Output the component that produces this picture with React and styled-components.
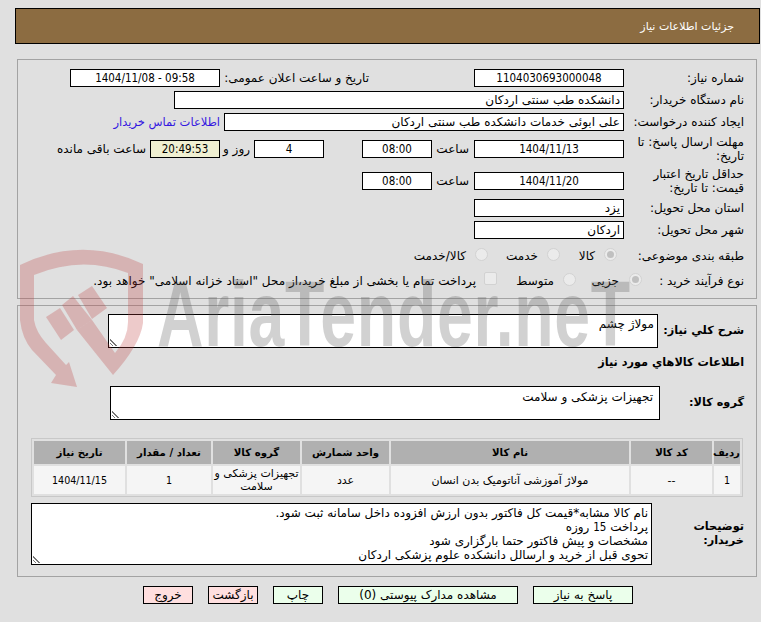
import React from "react";
import styled, { createGlobalStyle } from "styled-components";

const Global = createGlobalStyle`
  html, body { margin: 0; padding: 0; background: #e0e0e0; }
  body { font-family: "DejaVu Sans", Tahoma, sans-serif; font-size: 12px; color: #000; }
  * { box-sizing: border-box; }
`;
const Page = styled.div`
  position: relative;
  width: 761px;
  height: 622px;
  overflow: hidden;
  padding-top: 8px;
  direction: rtl;
`;
const Header = styled.div`
  width: 745px;
  height: 36px;
  margin-right: 1px;
  background: #8c6c41;
  border: 1px solid #000;
  color: #fff;
  display: flex;
  align-items: center;
  padding-right: 25px;
  font-size: 11px;
`;
const Panel = styled.div`
  width: 740px;
  margin-right: 4px;
  border: 1px solid #a3a3a3;
`;
const TopPanel = styled(Panel)`
  margin-top: 15px;
  height: 240px;
  padding: 9px 12px 0 0;
`;
const BottomPanel = styled(Panel)`
  margin-top: 6px;
  height: 272px;
  padding: 8px 12px 0 0;
`;
const Row = styled.div`
  display: flex;
  align-items: center;
  height: ${p => p.$h || 18}px;
  margin-top: ${p => p.$mt || 0}px;
  margin-bottom: ${p => p.$mb ?? 4}px;
`;
const Label = styled.div`
  width: ${p => p.$w || 120}px;
  flex: none;
  line-height: 14px;
  font-weight: ${p => (p.$bold ? 700 : 400)};
  font-size: ${p => (p.$bold ? 11.3 : 12)}px;
`;
const Field = styled.div`
  width: ${p => p.$w || 150}px;
  height: 18px;
  flex: none;
  margin-right: ${p => p.$mr || 0}px;
  border: 1px solid #000;
  background: ${p => p.$bg || "#fff"};
  display: flex;
  align-items: center;
  justify-content: ${p => (p.$start ? "flex-start" : "center")};
  padding: 0 3px;
  white-space: nowrap;
`;
const Num = styled.span`
  font-family: "DejaVu Sans Condensed", "Liberation Sans", sans-serif;
  font-size: 11.5px;
  direction: ltr;
  unicode-bidi: isolate;
`;
const TableNum = styled(Num)`
  font-size: 10.6px;
`;
const Text = styled.span`
  flex: none;
  white-space: nowrap;
  width: ${p => (p.$w ? `${p.$w}px` : "auto")};
  padding-right: ${p => p.$pr || 0}px;
`;
const LinkText = styled(Text)`
  color: #3417e0;
  font-size: 11.5px;
`;
const Radio = styled.span`
  width: 13px;
  height: 13px;
  flex: none;
  border-radius: 50%;
  border: 1px solid #d2d2d2;
  background: #ebebeb;
  margin: 0 ${p => p.$mr || 0}px 3px ${p => p.$ml || 9}px;
  display: flex;
  align-items: center;
  justify-content: center;
  &::after {
    content: "";
    display: ${p => (p.$on ? "block" : "none")};
    width: 7px;
    height: 7px;
    border-radius: 50%;
    background: #c0c0c0;
  }
`;
const Check = styled.span`
  width: 13px;
  height: 13px;
  flex: none;
  border: 1px solid #d2d2d2;
  border-radius: 2px;
  background: #ebebeb;
  margin: 0 ${p => p.$mr || 0}px 5px 8px;
`;
const Area = styled.div`
  position: relative;
  width: ${p => p.$w}px;
  height: ${p => p.$h}px;
  flex: none;
  background: #fff;
  border: 1px solid #000;
  padding: ${p => p.$pad || "2px 3px"};
  line-height: 14px;
  white-space: nowrap;
  overflow: hidden;
  &::after {
    content: "";
    position: absolute;
    left: 1px;
    bottom: 1px;
    width: 8px;
    height: 8px;
    background: repeating-linear-gradient(45deg, #fff 0 1.5px, #777 1.5px 2.5px);
    clip-path: polygon(0 0, 100% 100%, 0 100%);
  }
`;
const Heading = styled.div`
  font-weight: 700;
  font-size: 11.3px;
  height: 18px;
  line-height: 18px;
`;
const Table = styled.table`
  width: 712px;
  margin-right: 1px;
  border-collapse: separate;
  border-spacing: 2px;
  border: 1px solid #c8c8c8;
  table-layout: fixed;
`;
const Th = styled.th`
  background: #b0b0b0;
  height: 23px;
  padding: 0;
  font-size: 10.2px;
  font-weight: 700;
  text-align: center;
`;
const Td = styled.td`
  background: #f5f5f5;
  height: 28px;
  padding: 0;
  text-align: center;
  line-height: 13px;
  font-size: 11px;
`;
const Col = styled.col`
  width: ${p => p.$w}px;
`;
const Buttons = styled.div`
  display: flex;
  margin: 9px 128px 0 0;
  gap: 15px;
`;
const Btn = styled.div`
  width: ${p => p.$w || 50}px;
  height: 18px;
  border: 1px solid #000;
  background: ${p => (p.$red ? "#ffdfdf" : "#ebffeb")};
  display: flex;
  align-items: center;
  justify-content: center;
  white-space: nowrap;
`;
const Watermark = styled.div`
  position: absolute;
  left: 0;
  top: 0;
  width: 761px;
  height: 622px;
  pointer-events: none;
`;
const WmText = styled.div`
  position: absolute;
  left: 157px;
  top: 282px;
  direction: ltr;
  font-family: "Liberation Sans", sans-serif;
  font-weight: 700;
  font-size: 92px;
  line-height: 64px;
  letter-spacing: 1px;
  color: rgba(90, 90, 90, 0.28);
  white-space: nowrap;
  transform: scaleX(0.7);
  transform-origin: left top;
`;

function Logo() {
  return (
    <svg width="761" height="622" viewBox="0 0 761 622">
      <g fill="rgba(190,60,60,0.27)">
        <path d="M20 265 Q82 235 143 264 L143 323 Q140 345 113 375 L77 330 L92 320 L115 353 Q128 338 128 322 L128 273 Q82 255 34 275 L34 320 Q36 332 46 343 L66 365 L69 362 L77 387 L51 383 L56 375 L32 350 Q22 338 20 320 Z" />
        <path d="M62 305 L73 296 L92 320 L77 330 Z" />
        <path d="M78 295 L92 286 L107 308 L92 319 Z" />
        <path d="M46 317 L60 308 L74 330 L61 340 Z" />
      </g>
    </svg>
  );
}

export default function App() {
  return (
    <Page>
      <Global />
      <Header>جزئیات اطلاعات نیاز</Header>
      <TopPanel>
        <Row>
          <Label>شماره نیاز:</Label>
          <Field><Num>1104030693000048</Num></Field>
          <Text $pr={105} $w={254}>تاریخ و ساعت اعلان عمومی:</Text>
          <Field><Num>1404/11/08 - 09:58</Num></Field>
        </Row>
        <Row>
          <Label>نام دستگاه خریدار:</Label>
          <Field $w={450} $start>دانشکده طب سنتی اردکان</Field>
        </Row>
        <Row $mb={9}>
          <Label>ایجاد کننده درخواست:</Label>
          <Field $w={400} $start>علی ابوئی خدمات دانشکده طب سنتی اردکان</Field>
          <LinkText $pr={4}>اطلاعات تماس خریدار</LinkText>
        </Row>
        <Row $mb={14}>
          <Label>مهلت ارسال پاسخ: تا تاریخ:</Label>
          <Field><Num>1404/11/13</Num></Field>
          <Text $w={42} $pr={5}>ساعت</Text>
          <Field $w={70}><Num>08:00</Num></Field>
          <Field $w={70} $mr={38}><Num>4</Num></Field>
          <Text $w={34} $pr={4}>روز و</Text>
          <Field $w={70} $bg="#f0f0d2"><Num>20:49:53</Num></Field>
          <Text $pr={4}>ساعت باقی مانده</Text>
        </Row>
        <Row $mb={9}>
          <Label>حداقل تاریخ اعتبار قیمت: تا تاریخ:</Label>
          <Field><Num>1404/11/20</Num></Field>
          <Text $w={42} $pr={5}>ساعت</Text>
          <Field $w={70}><Num>08:00</Num></Field>
        </Row>
        <Row>
          <Label>استان محل تحویل:</Label>
          <Field $start>یزد</Field>
        </Row>
        <Row $mb={8}>
          <Label>شهر محل تحویل:</Label>
          <Field $start>اردکان</Field>
        </Row>
        <Row $mb={7}>
          <Label>طبقه بندی موضوعی:</Label>
          <Radio $on $mr={7} />
          <Text $w={16}>کالا</Text>
          <Radio $mr={19} />
          <Text $w={32}>خدمت</Text>
          <Radio $mr={18} />
          <Text>کالا/خدمت</Text>
        </Row>
        <Row $mb={0}>
          <Label $w={102}>نوع فرآیند خرید :</Label>
          <Radio $on $ml={10} />
          <Text $w={27}>جزیی</Text>
          <Radio $mr={16} />
          <Text $w={36}>متوسط</Text>
          <Check $mr={21} />
          <Text>پرداخت تمام یا بخشی از مبلغ خرید،از محل "اسناد خزانه اسلامی" خواهد بود.</Text>
        </Row>
      </TopPanel>
      <BottomPanel>
        <Row $h={34} $mb={6}>
          <Label $bold $w={86}>شرح کلي نیاز:</Label>
          <Area $w={550} $h={34}>مولاژ چشم</Area>
        </Row>
        <Heading>اطلاعات کالاهاي مورد نیاز</Heading>
        <Row $h={34} $mt={14} $mb={18}>
          <Label $bold $w={84}>گروه کالا:</Label>
          <Area $w={550} $h={34} $pad="3px 6px">تجهیزات پزشکی و سلامت</Area>
        </Row>
        <Table>
          <colgroup>
            <Col $w={26} />
            <Col $w={81} />
            <Col $w={238} />
            <Col $w={87} />
            <Col $w={87} />
            <Col $w={84} />
            <Col $w={91} />
          </colgroup>
          <thead>
            <tr>
              <Th>ردیف</Th>
              <Th>کد کالا</Th>
              <Th>نام کالا</Th>
              <Th>واحد شمارش</Th>
              <Th>گروه کالا</Th>
              <Th>تعداد / مقدار</Th>
              <Th>تاریخ نیاز</Th>
            </tr>
          </thead>
          <tbody>
            <tr>
              <Td><TableNum>1</TableNum></Td>
              <Td>--</Td>
              <Td>مولاژ آموزشی آناتومیک بدن انسان</Td>
              <Td>عدد</Td>
              <Td>تجهیزات پزشکی و سلامت</Td>
              <Td><TableNum>1</TableNum></Td>
              <Td><TableNum>1404/11/15</TableNum></Td>
            </tr>
          </tbody>
        </Table>
        <Row $h={62} $mb={0} $mt={6}>
          <Label $bold $w={92}>توضیحات<br />خریدار:</Label>
          <Area $w={621} $h={62}>
            نام کالا مشابه*قیمت کل فاکتور بدون ارزش افزوده داخل سامانه ثبت شود.<br />
            پرداخت <Num>15</Num> روزه<br />
            مشخصات و پیش فاکتور حتما بارگزاری شود<br />
            تحوی قبل از خرید و ارسالل دانشکده علوم پزشکی اردکان
          </Area>
        </Row>
      </BottomPanel>
      <Buttons>
        <Btn $w={100}>پاسخ به نیاز</Btn>
        <Btn $w={180}>مشاهده مدارک پیوستی (0)</Btn>
        <Btn>چاپ</Btn>
        <Btn $red>بازگشت</Btn>
        <Btn $red>خروج</Btn>
      </Buttons>
      <Watermark>
        <Logo />
        <WmText>AriaTender.neT</WmText>
      </Watermark>
    </Page>
  );
}
